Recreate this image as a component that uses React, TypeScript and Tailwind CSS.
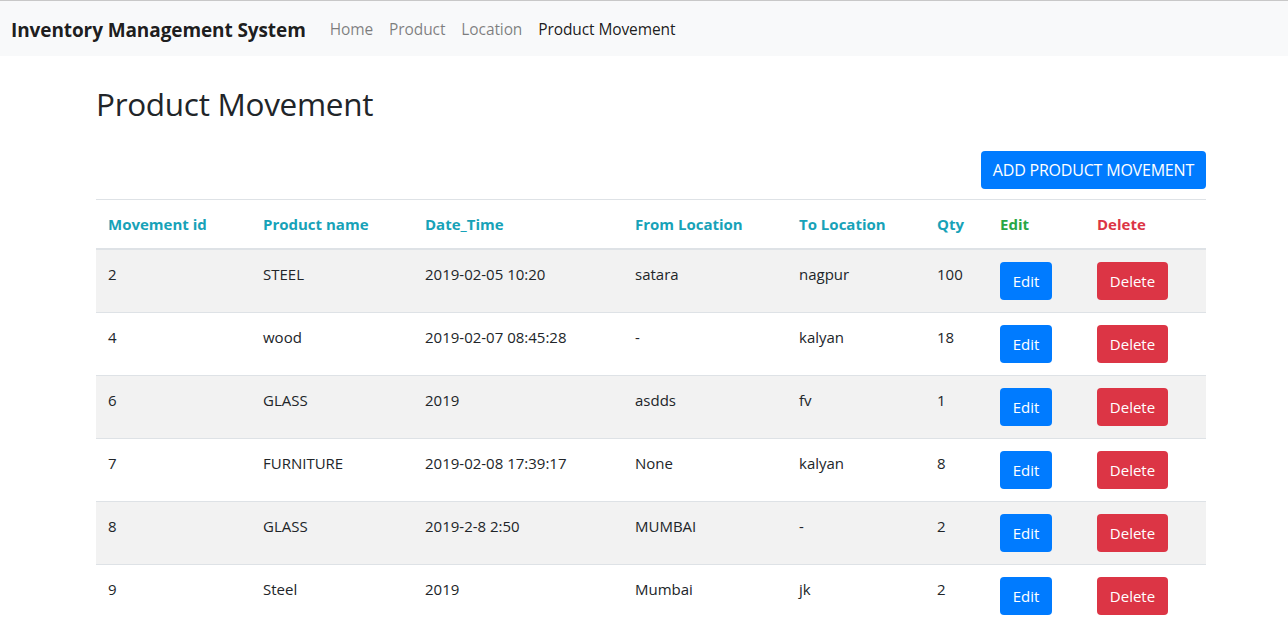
import React from 'react';

const rows = [
    { id: '2', name: 'STEEL', time: '2019-02-05 10:20', from: 'satara', to: 'nagpur', qty: '100' },
    { id: '4', name: 'wood', time: '2019-02-07 08:45:28', from: '-', to: 'kalyan', qty: '18' },
    { id: '6', name: 'GLASS', time: '2019', from: 'asdds', to: 'fv', qty: '1' },
    { id: '7', name: 'FURNITURE', time: '2019-02-08 17:39:17', from: 'None', to: 'kalyan', qty: '8' },
    { id: '8', name: 'GLASS', time: '2019-2-8 2:50', from: 'MUMBAI', to: '-', qty: '2' },
    { id: '9', name: 'Steel', time: '2019', from: 'Mumbai', to: 'jk', qty: '2' },
];

const font = { fontFamily: '"Open Sans", "Noto Sans", Arial, sans-serif' };

export default function App() {
    return (
        <div className="min-h-screen bg-white text-[#212529] border-t border-[#c8c8c8]" style={font}>
            {/* NAVBAR */}
            <nav className="h-[55px] bg-[#f8f9fa] flex items-center pl-[11px] pt-[3px]">
                <span className="text-[19px] font-bold text-black/90 tracking-[-0.1px] mr-[24px]">Inventory Management System</span>
                <div className="flex gap-[16px] text-[15.5px] tracking-[-0.1px]">
                    <a className="text-black/50">Home</a>
                    <a className="text-black/50">Product</a>
                    <a className="text-black/50">Location</a>
                    <a className="text-black/90">Product Movement</a>
                </div>
            </nav>

            <div className="ml-[96px] w-[1110px]">
                <h1 className="text-[31.5px] leading-[48px] mt-[24px] font-medium tracking-[-0.3px]">Product Movement</h1>

                <div className="flex justify-end mt-[23px] mb-[10px]">
                    <button className="bg-[#007bff] text-white rounded px-[12px] h-[38px] text-[16px] tracking-[-0.2px]">ADD PRODUCT MOVEMENT</button>
                </div>

                <table className="w-full table-fixed border-collapse text-[15px]">
                    <colgroup>
                        <col className="w-[155px]" />
                        <col className="w-[162px]" />
                        <col className="w-[210px]" />
                        <col className="w-[164px]" />
                        <col className="w-[138px]" />
                        <col className="w-[63px]" />
                        <col className="w-[97px]" />
                        <col className="w-[121px]" />
                    </colgroup>
                    <thead>
                        <tr className="border-t border-[#dee2e6] border-b-2 border-b-[#dee2e6] text-left font-bold">
                            <th className="p-[12px] leading-[24px] text-[#17a2b8]">Movement id</th>
                            <th className="p-[12px] leading-[24px] text-[#17a2b8]">Product name</th>
                            <th className="p-[12px] leading-[24px] text-[#17a2b8]">Date_Time</th>
                            <th className="p-[12px] leading-[24px] text-[#17a2b8]">From Location</th>
                            <th className="p-[12px] leading-[24px] text-[#17a2b8]">To Location</th>
                            <th className="p-[12px] leading-[24px] text-[#17a2b8]">Qty</th>
                            <th className="p-[12px] leading-[24px] text-[#28a745]">Edit</th>
                            <th className="p-[12px] leading-[24px] text-[#dc3545]">Delete</th>
                        </tr>
                    </thead>
                    <tbody>
                        {rows.map((r, i) => (
                            <tr key={r.id} className={`border-t border-[#dee2e6] align-top ${i % 2 === 0 ? 'bg-[#f2f2f2]' : 'bg-white'}`}>
                                <td className="p-[12px] leading-[24px]">{r.id}</td>
                                <td className="p-[12px] leading-[24px]">{r.name}</td>
                                <td className="p-[12px] leading-[24px]">{r.time}</td>
                                <td className="p-[12px] leading-[24px]">{r.from}</td>
                                <td className="p-[12px] leading-[24px]">{r.to}</td>
                                <td className="p-[12px] leading-[24px]">{r.qty}</td>
                                <td className="p-[12px] leading-[24px]">
                                    <button className="bg-[#007bff] text-white rounded w-[52px] h-[38px]">Edit</button>
                                </td>
                                <td className="p-[12px] leading-[24px]">
                                    <button className="bg-[#dc3545] text-white rounded w-[71px] h-[38px]">Delete</button>
                                </td>
                            </tr>
                        ))}
                    </tbody>
                </table>
            </div>
        </div>
    );
}
